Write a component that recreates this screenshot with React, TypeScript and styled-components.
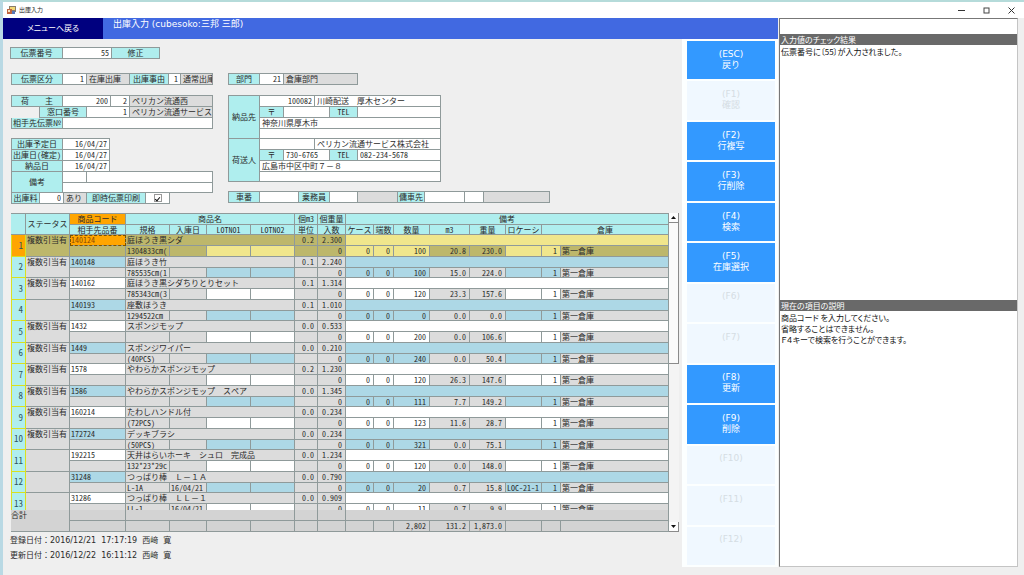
import React from "react";
import styled, { createGlobalStyle, css } from "styled-components";

const GRID_FONT = `"Noto Sans Mono CJK JP", "Noto Sans CJK JP", monospace`;
const UI_FONT = `"DejaVu Sans", "Noto Sans CJK JP", sans-serif`;

const color = {
  label: "#afeeee",
  line: "#8f9a9a",
  readOnly: "#dcdcdc",
  face: "#efefef",
  text: "#2b2b2b",
};

const GlobalStyle = createGlobalStyle`
  *, *::before, *::after { box-sizing: border-box; }
  body { margin: 0; background: #e6f4f1; }
  button, input { font: inherit; color: inherit; margin: 0; padding: 0; border: 0; border-radius: 0; }
`;

/* ---------- window ---------- */

const Window = styled.div`
  display: flex;
  flex-direction: column;
  height: 100vh;
  min-height: 560px;
  border-top: 2px solid #b5dbda;
  border-left: 3px solid #b9d9e4;
  background: ${color.face};
  font: 8px/11px ${UI_FONT};
  color: ${color.text};
`;

const TitleBar = styled.header`
  display: flex;
  align-items: center;
  height: 16px;
  padding: 0 8px 0 4px;
  background: #fff;
  flex: none;
`;

const WindowTitle = styled.h1`
  flex: 1;
  margin: 0 0 0 3px;
  font: 6px/8px "Noto Sans CJK JP", sans-serif;
  color: #222;
`;

const WindowButtons = styled.div`
  display: flex;
  gap: 16px;
`;

const WindowButton = styled.button`
  width: 9px;
  height: 9px;
  background: none;
  display: grid;
  place-items: center;
`;

const Workspace = styled.div`
  flex: 1;
  min-height: 0;
  display: grid;
  grid-template-columns: minmax(0, 1fr) 239px;
  column-gap: 1px;
  padding: 0 6px 8px 0;
`;

const MainPane = styled.div`
  display: flex;
  flex-direction: column;
  min-width: 0;
  min-height: 0;
`;

const Banner = styled.div`
  display: flex;
  height: 21px;
  flex: none;
  background: #4169e1;
  color: #fff;
`;

const MenuButton = styled.button`
  width: 100px;
  background: #00007f;
  color: #fff;
  font-feature-settings: "palt";
`;

const ScreenTitle = styled.h2`
  margin: 0 0 0 10px;
  font: 9px/13px ${UI_FONT};
  white-space: pre;
`;

const Columns = styled.div`
  flex: 1;
  min-height: 0;
  display: grid;
  grid-template-columns: minmax(0, 1fr) 96px;
`;

const Editor = styled.main`
  display: flex;
  flex-direction: column;
  min-width: 0;
  min-height: 0;
  padding: 8px 3px 0 7px;
`;

/* ---------- form ---------- */

const cell = css<{ $w?: number }>`
  display: block;
  flex: ${(p) => (p.$w ? `0 0 ${p.$w}px` : "1 1 0")};
  min-width: 0;
  border-right: 1px solid ${color.line};
  border-bottom: 1px solid ${color.line};
  overflow: hidden;
  white-space: pre;
`;

const Form = styled.form`
  flex: none;
  font: 8px/10px ${GRID_FONT};
`;

const Row = styled.div<{ $w?: number; $topLine?: boolean; $indent?: number }>`
  display: flex;
  height: ${(p) => (p.$topLine ? 12 : 11)}px;
  width: ${(p) => (p.$w ? `${p.$w}px` : "auto")};
  margin-left: ${(p) => p.$indent ?? 0}px;
  ${(p) => p.$topLine && `border-top: 1px solid ${color.line};`}
  border-left: 1px solid ${color.line};
`;

const Caption = styled.label<{ $w?: number }>`
  ${cell}
  background: ${color.label};
  text-align: center;
`;

const ModeButton = styled.button<{ $w?: number }>`
  ${cell}
  background: ${color.label};
`;

const TextBox = styled.input<{ $w?: number; $right?: boolean }>`
  ${cell}
  width: 0;
  padding: 0 2px;
  background: #fff;
  text-align: ${(p) => (p.$right ? "right" : "left")};
`;

const Readout = styled.output<{ $w?: number }>`
  ${cell}
  padding-left: 2px;
  background: ${color.readOnly};
`;

const CheckCell = styled.span<{ $w?: number }>`
  ${cell}
  background: #fff;
  display: grid;
  place-items: center;
`;

const CheckBox = styled.input`
  appearance: none;
  display: grid;
  place-items: center;
  width: 8px;
  height: 8px;
  border: 1px solid #999;
  background: #fff;
  &:checked::before {
    content: "";
    width: 3px;
    height: 5px;
    border: solid #111;
    border-width: 0 1px 1px 0;
    transform: rotate(40deg);
  }
`;

const Halves = styled.div`
  display: grid;
  grid-template-columns: 202px minmax(0, 1fr);
  column-gap: 15px;
  padding-left: 1px;
`;

const Group = styled.div<{ $mt?: number }>`
  margin-top: ${(p) => p.$mt ?? 0}px;
`;

const Block = styled.div<{ $w: number; $label: number; $topLine?: boolean; $joined?: boolean }>`
  display: grid;
  width: ${(p) => p.$w}px;
  grid-template-columns: ${(p) => p.$label}px minmax(0, 1fr);
  ${(p) => p.$topLine && `border-top: 1px solid ${color.line};`}
  ${(p) => p.$joined && "margin-top: -1px;"}
  border-left: 1px solid ${color.line};
`;

const BlockCaption = styled.div`
  display: grid;
  place-items: center;
  background: ${color.label};
  border-right: 1px solid ${color.line};
  border-bottom: 1px solid ${color.line};
`;

const BlockRows = styled.div<{ $rows: string }>`
  display: grid;
  grid-template-rows: ${(p) => p.$rows};
`;

const BlockRow = styled.div`
  display: flex;
  min-height: 0;
`;

/* ---------- detail grid ---------- */

const GridFrame = styled.section`
  flex: 1;
  min-height: 0;
  display: flex;
  margin: 9px 0 0 1px;
  font: 8px/10px ${GRID_FONT};
`;

const Tables = styled.div`
  flex: 1;
  min-width: 0;
  display: flex;
  flex-direction: column;
  border-top: 1px solid ${color.line};
`;

const BodyView = styled.div`
  flex: 1;
  min-height: 0;
  overflow: hidden;
`;

const Table = styled.table`
  width: 100%;
  table-layout: fixed;
  border-collapse: separate;
  border-spacing: 0;
`;

const Line = styled.tr<{ $short?: boolean }>`
  height: ${(p) => (p.$short ? 10 : 11)}px;
  line-height: ${(p) => (p.$short ? 9 : 10)}px;
`;

const Head = styled.th<{ $active?: boolean }>`
  padding: 0;
  font-weight: 400;
  background: ${(p) => (p.$active ? "#ffa500" : color.label)};
  border-right: 1px solid ${color.line};
  border-bottom: 1px solid ${color.line};
  white-space: nowrap;
  overflow: hidden;
`;

const Data = styled.td<{ $bg: string; $right?: boolean; $focus?: boolean }>`
  padding: ${(p) => (p.$right ? "0 3px 0 0" : "0 0 0 1px")};
  background: ${(p) => p.$bg};
  border-right: 1px solid ${color.line};
  border-bottom: 1px solid ${color.line};
  text-align: ${(p) => (p.$right ? "right" : "left")};
  vertical-align: top;
  white-space: pre;
  overflow: hidden;
  ${(p) => p.$focus && "outline: 1px dashed #7a5200; outline-offset: -1px; color: #8a4b00;"}
`;

const TotalLabel = styled.th`
  padding: 0;
  font-weight: 400;
  text-align: right;
  vertical-align: top;
  white-space: nowrap;
  background: #d3d3d3;
  border-bottom: 1px solid ${color.line};
`;

const RowNumber = styled.th<{ $active?: boolean }>`
  padding: 0 2px 0 0;
  font-size: 9px;
  font-weight: 400;
  text-align: right;
  vertical-align: middle;
  color: #2f5560;
  background: ${(p) => (p.$active ? "#ffa500" : color.label)};
  border: 1px solid #d9e021;
  border-top: 0;
`;

const ScrollBar = styled.div`
  width: 10px;
  flex: none;
  display: flex;
  flex-direction: column;
  background: #f4f4f4;
`;

const ScrollButton = styled.button`
  height: 10px;
  background: #fdfdfd;
  border-right: 1px solid #8a8a8a;
  border-bottom: 1px solid #8a8a8a;
  display: grid;
  place-items: center;
`;

const Track = styled.div`
  flex: 1;
`;

const Thumb = styled.div`
  height: 47%;
  background: #fafafa;
  border-right: 1px solid #8a8a8a;
  border-bottom: 1px solid #8a8a8a;
`;

const Stamps = styled.footer`
  flex: none;
  height: 35px;
  padding-top: 1px;
  line-height: 15px;
  white-space: pre;
`;

/* ---------- function keys ---------- */

const KeyColumn = styled.nav`
  display: grid;
  grid-auto-rows: minmax(0, 1fr);
  gap: 2px;
  padding: 2px 3px 2px 5px;
  background: #fcffff;
`;

const KeyButton = styled.button`
  padding-bottom: 1px;
  background: #3399ff;
  color: #fff;
  font-size: 9px;
  line-height: 11px;
  white-space: pre;
  &:disabled {
    background: #f0f8ff;
    color: #d5dde3;
  }
`;

/* ---------- message panel ---------- */

const Messages = styled.aside`
  display: flex;
  flex-direction: column;
  min-height: 0;
  background: #fff;
  border: 1px solid #777;
  border-right-color: #c4c4c4;
  border-bottom-color: #c4c4c4;
  font: 8px/11px "Noto Sans CJK JP", sans-serif;
  font-feature-settings: "palt";
`;

const Command = styled.input`
  height: 15px;
  flex: none;
  width: 100%;
  padding: 0 2px;
`;

const MessageBox = styled.section<{ $grow: number }>`
  flex: ${(p) => p.$grow} 1 0;
  min-height: 0;
`;

const MessageHead = styled.h3`
  margin: 0;
  padding-left: 1px;
  font: inherit;
  background: #696969;
  color: #fff;
`;

const MessageText = styled.p`
  margin: 0;
  padding: 1px;
  color: #111;
  white-space: pre-wrap;
`;

/* ---------- data ---------- */

type Item = {
  status: boolean;
  code: string;
  name: string;
  spec: string;
  date?: string;
  unit: string;
  weight: string;
  qty: string;
  m3: string;
  total: string;
  loc?: string;
};

const row = (
  status: boolean, code: string, name: string, spec: string, unit: string,
  weight: string, qty: string, m3: string, total: string, date = "", loc = "",
): Item => ({ status, code, name, spec, unit, weight, qty, m3, total, date, loc });

const items: Item[] = [
  row(true, "140124", "庭ほうき黒シダ", "1304833cm(", "0.2", "2.300", "100", "20.8", "230.0"),
  row(true, "140148", "庭ほうき竹", "785535cm(1", "0.1", "2.240", "100", "15.0", "224.0"),
  row(true, "140162", "庭ほうき黒シダちりとりセット", "785343cm(3", "0.1", "1.314", "120", "23.3", "157.6"),
  row(false, "140193", "座敷ほうき", "1294522cm", "0.1", "1.010", "0", "0.0", "0.0"),
  row(true, "1432", "スポンジモップ", "", "0.0", "0.533", "200", "0.0", "106.6"),
  row(true, "1449", "スポンジワイパー", "(40PCS)", "0.0", "0.210", "240", "0.0", "50.4"),
  row(true, "1578", "やわらかスポンジモップ", "", "0.2", "1.230", "120", "26.3", "147.6"),
  row(true, "1586", "やわらかスポンジモップ　スペア", "", "0.0", "1.345", "111", "7.7", "149.2"),
  row(true, "160214", "たわしハンドル付", "(72PCS)", "0.0", "0.234", "123", "11.6", "28.7"),
  row(true, "172724", "デッキブラシ", "(50PCS)", "0.0", "0.234", "321", "0.0", "75.1"),
  row(false, "192215", "天井はらいホーキ　シュロ　完成品", "132*23*29c", "0.0", "1.234", "120", "0.0", "148.0"),
  row(false, "31248", "つっぱり棒　Ｌ－１Ａ", "L-1A", "0.0", "0.790", "20", "0.7", "15.8", "16/04/21", "LOC-21-1"),
  row(false, "31286", "つっぱり棒　ＬＬ－１", "LL-1", "0.0", "0.909", "11", "0.7", "9.9", "16/04/21"),
];

const widths = [15, 44, 56, 44, 37, 44, 44, 23, 28, 28, 20, 36, 40, 36, 36, 19];

const keys: [string, string, boolean][] = [
  ["(ESC)", "戻り", true],
  ["(F1)", "確認", false],
  ["(F2)", "行複写", true],
  ["(F3)", "行削除", true],
  ["(F4)", "検索", true],
  ["(F5)", "在庫選択", true],
  ["(F6)", " ", false],
  ["(F7)", " ", false],
  ["(F8)", "更新", true],
  ["(F9)", "削除", true],
  ["(F10)", " ", false],
  ["(F11)", " ", false],
  ["(F12)", " ", false],
];

const Cols = () => (
  <colgroup>
    {widths.map((w, i) => <col key={i} width={w} />)}
    <col />
  </colgroup>
);

function ItemRows({ item, index }: { item: Item; index: number }) {
  const active = index === 0;
  const odd = index % 2 === 0;
  const edit = active ? "#f0e68c" : odd ? "#ffffff" : "#add8e6";
  const fixed = active ? "#bdb76b" : color.readOnly;
  return (
    <>
      <Line>
        <RowNumber scope="row" rowSpan={2} $active={active}>{index + 1}</RowNumber>
        <Data rowSpan={2} $bg={fixed}>{item.status ? "複数引当有" : ""}</Data>
        <Data $bg={active ? "#ffa500" : edit} $focus={active}>{item.code}</Data>
        <Data $bg={fixed} colSpan={4}>{item.name}</Data>
        <Data $bg={fixed} $right>{item.unit}</Data>
        <Data $bg={fixed} $right>{item.weight}</Data>
        <Data $bg={edit} colSpan={8} />
      </Line>
      <Line $short={!odd}>
        <Data $bg={fixed} />
        <Data $bg={fixed}>{item.spec}</Data>
        <Data $bg={fixed}>{item.date}</Data>
        <Data $bg={edit} />
        <Data $bg={edit} />
        <Data $bg={fixed} />
        <Data $bg={fixed} $right>0</Data>
        <Data $bg={edit} $right>0</Data>
        <Data $bg={edit} $right>0</Data>
        <Data $bg={edit} $right>{item.qty}</Data>
        <Data $bg={fixed} $right>{item.m3}</Data>
        <Data $bg={fixed} $right>{item.total}</Data>
        <Data $bg={edit}>{item.loc}</Data>
        <Data $bg={edit} $right>1</Data>
        <Data $bg={fixed}>第一倉庫</Data>
      </Line>
    </>
  );
}

function DetailGrid() {
  const sum = "#d3d3d3";
  return (
    <GridFrame aria-label="明細">
      <Tables>
        <Table>
          <Cols />
          <thead>
            <Line>
              <Head rowSpan={2} />
              <Head rowSpan={2}>ステータス</Head>
              <Head $active>商品コード</Head>
              <Head colSpan={4}>商品名</Head>
              <Head>個m3</Head>
              <Head>個重量</Head>
              <Head colSpan={8}>備考</Head>
            </Line>
            <Line $short>
              {["相手先品番", "規格", "入庫日", "LOTNO1", "LOTNO2", "単位", "入数", "ケース", "端数", "数量", "m3", "重量", "ロケーシ"].map((t) => (
                <Head key={t}>{t}</Head>
              ))}
              <Head colSpan={2}>倉庫</Head>
            </Line>
          </thead>
        </Table>
        <BodyView>
          <Table>
            <Cols />
            <tbody>
              {items.map((item, i) => <ItemRows key={item.code} item={item} index={i} />)}
            </tbody>
          </Table>
        </BodyView>
        <Table>
          <Cols />
          <tbody>
            <Line>
              <TotalLabel scope="row" rowSpan={2}>合計</TotalLabel>
              <Data $bg={sum} rowSpan={2} />
              <Data $bg={sum} />
              <Data $bg={sum} colSpan={4} />
              <Data $bg={sum} />
              <Data $bg={sum} />
              <Data $bg={sum} colSpan={8} />
            </Line>
            <Line>
              {["", "", "", "", "", "", "", "", "", "2,802", "131.2", "1,873.0", "", "", ""].map((t, i) => (
                <Data key={i} $bg={sum} $right>{t}</Data>
              ))}
            </Line>
          </tbody>
        </Table>
      </Tables>
      <ScrollBar>
        <ScrollButton type="button" aria-label="上へ">
          <svg width="5" height="3"><path d="M0 3h5L2.500 0z" fill="#111" /></svg>
        </ScrollButton>
        <Track><Thumb /></Track>
        <ScrollButton type="button" aria-label="下へ">
          <svg width="5" height="3"><path d="M0 0h5L2.500 3z" fill="#111" /></svg>
        </ScrollButton>
      </ScrollBar>
    </GridFrame>
  );
}

type PartyProps = {
  id: string; title: string; code: string; name: string;
  zip: string; tel: string; address: string; topLine?: boolean;
};

function Party({ id, title, code, name, zip, tel, address, topLine }: PartyProps) {
  return (
    <Block $w={213} $label={31} $topLine={topLine}>
      <BlockCaption>{title}</BlockCaption>
      <BlockRows $rows="11px 11px 11px 10px">
        <BlockRow>
          <TextBox $w={55} $right defaultValue={code} aria-label={`${title}コード`} />
          <TextBox defaultValue={name} aria-label={`${title}名`} />
        </BlockRow>
        <BlockRow>
          <Caption $w={24} htmlFor={`${id}-zip`}>〒</Caption>
          <TextBox $w={46} id={`${id}-zip`} defaultValue={zip} />
          <Caption $w={28} htmlFor={`${id}-tel`}>TEL</Caption>
          <TextBox id={`${id}-tel`} defaultValue={tel} />
        </BlockRow>
        <BlockRow><TextBox defaultValue={address} aria-label={`${title}住所1`} /></BlockRow>
        <BlockRow><TextBox aria-label={`${title}住所2`} /></BlockRow>
      </BlockRows>
    </Block>
  );
}

function SlipForm() {
  return (
    <Form>
      <Row $topLine $w={150}>
        <Caption $w={52} htmlFor="slip">伝票番号</Caption>
        <TextBox $w={49} $right id="slip" defaultValue="55" />
        <ModeButton type="button">修正</ModeButton>
      </Row>
      <Group $mt={14}>
        <Halves>
          <div>
            <Row $topLine>
              <Caption $w={51} htmlFor="kind">伝票区分</Caption>
              <TextBox $w={24} $right id="kind" defaultValue="1" />
              <Readout $w={43}>在庫出庫</Readout>
              <Caption $w={39} htmlFor="reason">出庫事由</Caption>
              <TextBox $w={12} $right id="reason" defaultValue="1" />
              <Readout>通常出庫</Readout>
            </Row>
            <Group $mt={10}>
              <Row $topLine>
                <Caption $w={51} htmlFor="shipper">荷　　主</Caption>
                <TextBox $w={48} $right id="shipper" defaultValue="200" />
                <TextBox $w={19} $right aria-label="荷主枝番" defaultValue="2" />
                <Readout>ペリカン流通西</Readout>
              </Row>
              <Row $indent={28}>
                <Caption $w={47} htmlFor="desk">窓口番号</Caption>
                <TextBox $w={43} $right id="desk" defaultValue="1" />
                <Readout>ペリカン流通サービス</Readout>
              </Row>
              <Row>
                <Caption $w={51} htmlFor="partner">相手先伝票№</Caption>
                <TextBox id="partner" />
              </Row>
            </Group>
            <Group $mt={9}>
              {["出庫予定日", "出庫日(確定)", "納品日"].map((t, i) => (
                <Row key={t} $topLine={i === 0} $w={99}>
                  <Caption $w={51} htmlFor={`date${i}`}>{t}</Caption>
                  <TextBox $right id={`date${i}`} defaultValue="16/04/27" />
                </Row>
              ))}
              <Block $w={202} $label={51} $topLine $joined>
                <BlockCaption>備考</BlockCaption>
                <BlockRows $rows="11px 10px">
                  <BlockRow>
                    <TextBox $w={24} aria-label="備考コード" />
                    <TextBox aria-label="備考1" />
                  </BlockRow>
                  <BlockRow><TextBox aria-label="備考2" /></BlockRow>
                </BlockRows>
              </Block>
              <Row $w={159}>
                <Caption $w={28} htmlFor="fee">出庫料</Caption>
                <TextBox $w={24} $right id="fee" defaultValue="0" />
                <Readout $w={23}>あり</Readout>
                <Caption $w={59} htmlFor="print">即時伝票印刷</Caption>
                <CheckCell><CheckBox type="checkbox" id="print" defaultChecked /></CheckCell>
              </Row>
            </Group>
          </div>
          <div>
            <Row $topLine $w={130}>
              <Caption $w={31} htmlFor="section">部門</Caption>
              <TextBox $w={24} $right id="section" defaultValue="21" />
              <Readout>倉庫部門</Readout>
            </Row>
            <Group $mt={10}>
              <Party id="dest" title="納品先" code="100082" name="川崎配送　厚木センター" zip="" tel="" address="神奈川県厚木市" topLine />
              <Party id="from" title="荷送人" code="" name="ペリカン流通サービス株式会社" zip="730-6765" tel="082-234-5678" address="広島市中区中町７－８" />
            </Group>
            <Group $mt={9}>
              <Row $topLine $w={322}>
                <Caption $w={31} htmlFor="car">車番</Caption>
                <TextBox $w={39} id="car" />
                <Caption $w={31} htmlFor="crew">乗務員</Caption>
                <TextBox $w={28} id="crew" />
                <Readout $w={40} />
                <Caption $w={27} htmlFor="hire">傭車先</Caption>
                <TextBox $w={40} id="hire" />
                <TextBox $w={19} aria-label="傭車先枝番" />
                <Readout />
              </Row>
            </Group>
          </div>
        </Halves>
      </Group>
    </Form>
  );
}

export default function App() {
  return (
    <>
      <GlobalStyle />
      <Window>
        <TitleBar>
          <svg width="9" height="9" viewBox="0 0 9 9" aria-hidden="true">
            <rect x="2" y="0" width="7" height="6" fill="#8a7d6a" />
            <rect x="3" y="1" width="5" height="3" fill="#f3d774" />
            <rect x="0" y="3" width="5" height="5" fill="#c0653f" />
            <rect x="1" y="4" width="2" height="2" fill="#f6e3c0" />
            <rect x="5" y="5" width="3" height="3" fill="#5a78b8" />
          </svg>
          <WindowTitle>出庫入力</WindowTitle>
          <WindowButtons>
            <WindowButton type="button" aria-label="最小化">
              <svg width="7" height="7"><path d="M0 3.500h7" stroke="#333" /></svg>
            </WindowButton>
            <WindowButton type="button" aria-label="最大化">
              <svg width="7" height="7"><rect x="1" y="1" width="5" height="5" fill="none" stroke="#444" /></svg>
            </WindowButton>
            <WindowButton type="button" aria-label="閉じる">
              <svg width="7" height="7"><path d="M.5.5l6 6M6.500.5l-6 6" stroke="#333" /></svg>
            </WindowButton>
          </WindowButtons>
        </TitleBar>
        <Workspace>
          <MainPane>
            <Banner>
              <MenuButton type="button">メニューへ戻る</MenuButton>
              <ScreenTitle>出庫入力 (cubesoko:三邦 三郎)</ScreenTitle>
            </Banner>
            <Columns>
              <Editor>
                <SlipForm />
                <DetailGrid />
                <Stamps>{"登録日付：2016/12/21  17:17:19  西﨑  寛\n更新日付：2016/12/22  16:11:12  西﨑  寛"}</Stamps>
              </Editor>
              <KeyColumn aria-label="ファンクションキー">
                {keys.map(([key, text, enabled]) => (
                  <KeyButton key={key} type="button" disabled={!enabled}>{`${key}\n${text}`}</KeyButton>
                ))}
              </KeyColumn>
            </Columns>
          </MainPane>
          <Messages>
            <Command aria-label="コマンド" />
            <MessageBox $grow={266}>
              <MessageHead>入力値のチェック結果</MessageHead>
              <MessageText>伝票番号に〔55〕が入力されました。</MessageText>
            </MessageBox>
            <MessageBox $grow={267}>
              <MessageHead>現在の項目の説明</MessageHead>
              <MessageText>{"商品コード を入力してください。\n省略することはできません。\nＦ４キーで検索を行うことができます。"}</MessageText>
            </MessageBox>
          </Messages>
        </Workspace>
      </Window>
    </>
  );
}
